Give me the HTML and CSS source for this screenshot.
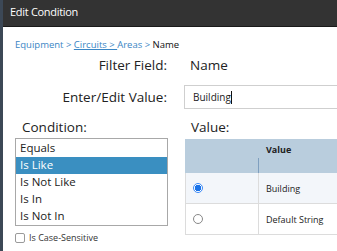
FILE: index.html
```html
<!DOCTYPE html>
<html>
<head>
<meta charset="utf-8">
<link rel="stylesheet" href="styles.css">
</head>
<body>
<div class="page">
  <div class="strip"></div>
  <div class="dialog">
    <div class="titlebar">Edit Condition</div>
    <div class="content">
      <div class="crumbs"><span class="lnk">Equipment &gt; </span><span class="lnk ul">Circuits &gt; </span><span class="lnk">Areas &gt; </span><span class="cur">Name</span></div>
      <div class="formrow r1">
        <div class="lbl">Filter Field:</div>
        <div class="val">Name</div>
      </div>
      <div class="formrow r2">
        <div class="lbl">Enter/Edit Value:</div>
        <div class="inputbox">Building<span class="caret"></span></div>
      </div>
      <div class="cols">
        <div class="left">
          <div class="sect">Condition:</div>
          <div class="list">
            <div class="item">Equals</div>
            <div class="item sel">Is Like</div>
            <div class="item">Is Not Like</div>
            <div class="item">Is In</div>
            <div class="item">Is Not In</div>
          </div>
          <div class="chk"><span class="box"></span>Is Case-Sensitive</div>
        </div>
        <div class="right">
          <div class="sect">Value:</div>
          <div class="table">
            <div class="thead">
              <div class="th1"></div>
              <div class="th2">Value</div>
            </div>
            <div class="tr alt">
              <div class="td1"><span class="radio on"></span></div>
              <div class="td2">Building</div>
            </div>
            <div class="tr">
              <div class="td1"><span class="radio"></span></div>
              <div class="td2">Default String</div>
            </div>
          </div>
        </div>
      </div>
    </div>
  </div>
</div>
</body>
</html>
```
FILE: styles.css
```css
* { box-sizing: border-box; }
html, body { margin: 0; padding: 0; }
body { width: 337px; height: 251px; overflow: hidden; font-family: "Open Sans", sans-serif; color: #222; background: #fff; }
.page { display: flex; height: 251px; }
.strip { width: 3px; background: #3c4856; flex: none; }
.dialog { flex: 1; display: flex; flex-direction: column; background: #fff; }
.titlebar { height: 27px; background: #333333; border-bottom: 1px solid #1a1a1a; color: #fff; font-size: 11px; line-height: 24px; padding-left: 7px; letter-spacing: -0.3px; }
.content { padding: 11px 0 0 12px; }
.crumbs { font-size: 9.5px; line-height: 14px; }
.lnk { color: #3a86c5; }
.ul { text-decoration: underline; }
.cur { color: #111; }
.formrow { display: flex; align-items: center; }
.lbl { width: 152px; text-align: right; font-size: 13.5px; color: #222; }
.r1 { margin-top: 3px; height: 20px; }
.r1 .val { margin-left: 23px; font-size: 13.5px; }
.r2 { margin-top: 10px; height: 24px; }
.inputbox { margin-left: 17px; flex: 1; height: 24px; border: 1px solid #cfcfcf; border-right: none; font-size: 10px; line-height: 22px; padding-left: 8px; display: flex; align-items: center; }
.caret { display: inline-block; width: 1px; height: 13px; background: #111; }
.cols { display: flex; margin-top: 9px; }
.left { width: 153px; }
.right { flex: 1; margin-left: 17px; }
.sect { font-size: 13.5px; line-height: 18px; padding-left: 7px; }
.right .sect { padding-left: 6px; }
.list { margin-top: 2px; border: 1px solid #a8a8a8; height: 88px; padding-top: 1px; }
.item { height: 17px; font-size: 11.5px; line-height: 16px; padding-left: 4px; }
.item.sel { background: #3a8fc1; color: #fff; }
.chk { margin-top: 5px; font-size: 9px; display: flex; align-items: center; color: #333; }
.box { width: 10px; height: 10px; border: 1px solid #9a9a9a; border-radius: 2px; margin-right: 4px; }
.table { margin-top: 3px; }
.thead { display: flex; height: 34px; background: #b9cddd; }
.th1 { width: 74px; border-right: 1px solid #7f9fbf; margin-top: 19px; }
.th2 { flex: 1; font-size: 9px; font-weight: bold; padding: 4px 0 0 7px; color: #222; }
.tr { display: flex; height: 31px; border-bottom: 1px solid #dcdcdc; border-left: 1px solid #dcdcdc; }
.tr.alt { background: #f3f6fa; }
.td1 { width: 73px; border-right: 1px solid #dcdcdc; display: flex; align-items: center; padding-left: 7px; }
.td2 { flex: 1; font-size: 9px; display: flex; align-items: center; padding-left: 7px; color: #222; }
.radio { width: 10px; height: 10px; border: 1px solid #888; border-radius: 50%; background: #fff; display: inline-block; }
.radio.on { border: 1px solid #3d8af7; background: radial-gradient(circle, #1a73e8 0 3px, #fff 3.5px); }
```
